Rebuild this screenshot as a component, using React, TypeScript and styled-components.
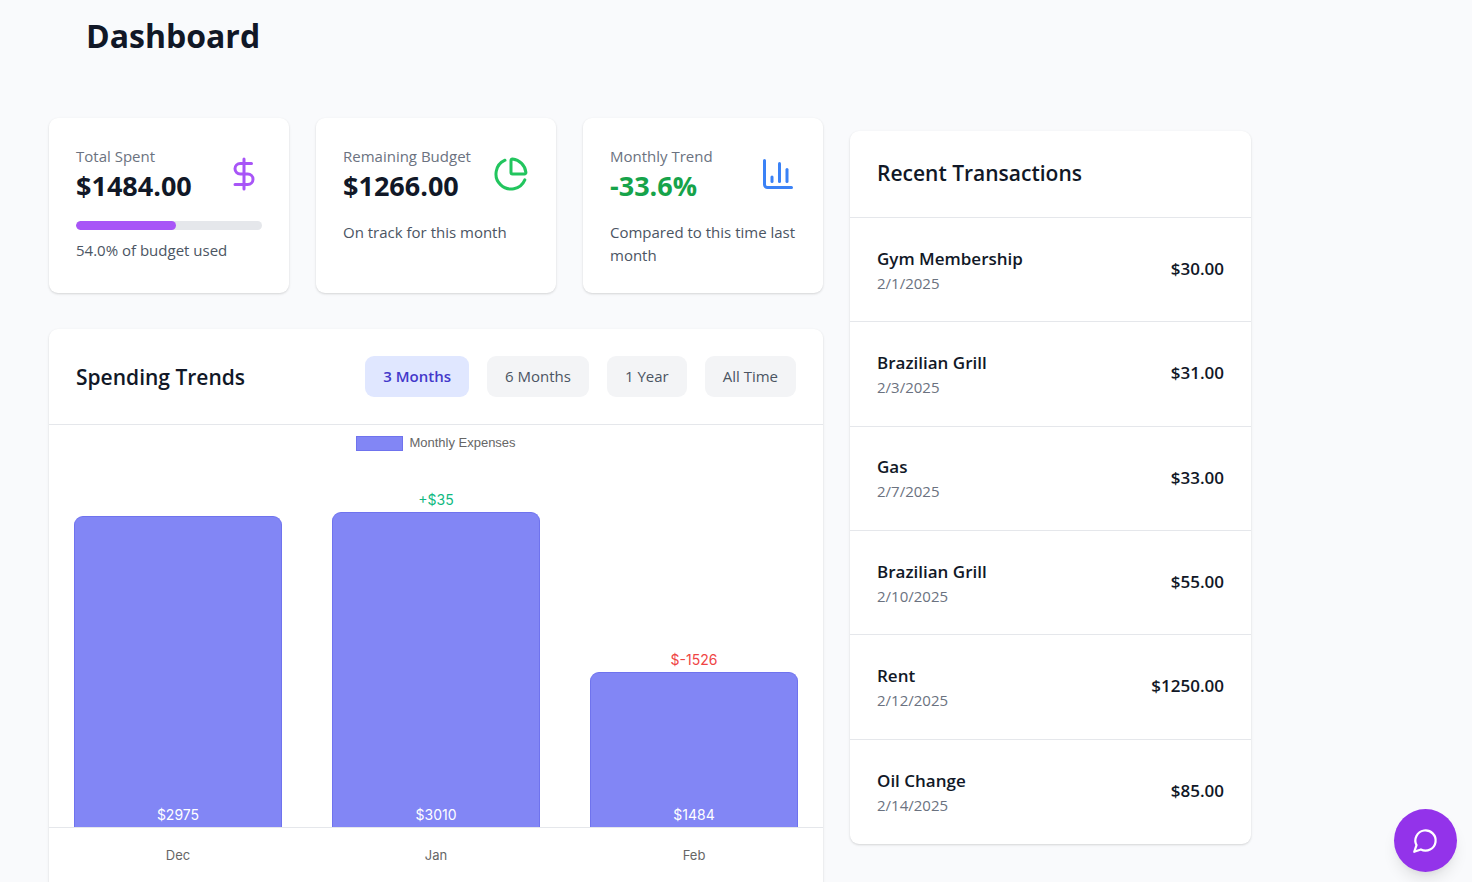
import React, { useState } from "react";
import styled, { createGlobalStyle, css } from "styled-components";
import { ChartColumn, ChartPie, DollarSign } from "lucide-react";

const GlobalStyle = createGlobalStyle`
  *, *::before, *::after { box-sizing: border-box; }
  body {
    margin: 0;
    min-height: 100vh;
    background: #f9fafc;
    color: #111827;
    font-family: "Segoe UI", "Open Sans", "Noto Sans", sans-serif;
    font-size: 16px;
  }
  h1, h2, p, ul { margin: 0; padding: 0; }
  button { font: inherit; border: 0; cursor: pointer; }
`;

const Page = styled.main`
  max-width: 1300px;
  padding: 16px 49px 0;
`;

const Title = styled.h1`
  padding: 0 37px;
  font-size: 32px;
  line-height: 40px;
  font-weight: 700;
`;

const Columns = styled.div`
  display: grid;
  grid-template-columns: 774fr 401fr;
  gap: 27px;
  align-items: start;
  margin-top: 62px;
`;

const MainColumn = styled.div`
  display: grid;
  gap: 36px;
  min-width: 0;
`;

const Card = styled.section`
  background: #fff;
  border-radius: 9px;
  box-shadow: 0 1px 3px rgba(0, 0, 0, 0.1), 0 1px 2px rgba(0, 0, 0, 0.06);
`;

const Stats = styled.div`
  display: grid;
  grid-template-columns: repeat(3, minmax(0, 1fr));
  gap: 27px;
`;

const StatCard = styled(Card)`
  padding: 27px 27px 26px;
`;

const StatTop = styled.div`
  display: flex;
  align-items: center;
  justify-content: space-between;
`;

const StatLabel = styled.p`
  color: #6b7280;
  font-size: 15px;
  line-height: 23px;
  white-space: nowrap;
`;

const StatValue = styled.p<{ $good?: boolean }>`
  color: ${(p) => (p.$good ? "#16a34a" : "#111827")};
  font-size: 27px;
  line-height: 35px;
  font-weight: 700;
`;

const StatNote = styled.p<{ $tight?: boolean }>`
  margin-top: ${(p) => (p.$tight ? 9 : 18)}px;
  color: #4b5563;
  font-size: 15px;
  line-height: 23px;
`;

const Track = styled.div`
  height: 9px;
  margin-top: 18px;
  border-radius: 5px;
  background: #e5e7eb;
  overflow: hidden;
`;

const Fill = styled.div`
  height: 100%;
  border-radius: 5px;
  background: #a855f7;
`;

const TrendsHeader = styled.header`
  display: flex;
  align-items: center;
  justify-content: space-between;
  padding: 27px;
  border-bottom: 1px solid #e5e7eb;
`;

const Heading = styled.h2`
  font-size: 21px;
  line-height: 32px;
  font-weight: 600;
`;

const Ranges = styled.div`
  display: flex;
  gap: 18px;
`;

const RangeButton = styled.button<{ $active: boolean }>`
  padding: 9px 18px;
  border-radius: 9px;
  font-size: 15px;
  line-height: 23px;
  background: #f3f4f6;
  color: #4b5563;
  ${(p) =>
    p.$active &&
    css`
      background: #e0e7ff;
      color: #4338ca;
      font-weight: 600;
    `}
`;

const Legend = styled.div`
  display: flex;
  align-items: center;
  justify-content: center;
  gap: 6px;
  padding-top: 9px;
  color: #666;
  font-family: "Liberation Sans", Arial, sans-serif;
  font-size: 13px;
  line-height: 18px;
`;

const Swatch = styled.span`
  width: 47px;
  height: 15px;
  border: 1px solid #6f73ee;
  background: #8286f5;
`;

const Plot = styled.div`
  display: grid;
  grid-template-columns: repeat(3, 1fr);
  align-items: end;
  height: 376px;
  border-bottom: 1px solid #e5e7eb;
  font-family: Inter, Arial, sans-serif;
  font-size: 14px;
  line-height: 18px;
`;

const BarSlot = styled.div`
  display: flex;
  flex-direction: column;
  align-items: center;
  gap: 3px;
`;

const Delta = styled.span<{ $up: boolean }>`
  color: ${(p) => (p.$up ? "#10b981" : "#ef4444")};
`;

const Bar = styled.div`
  display: flex;
  align-items: flex-end;
  justify-content: center;
  width: 81%;
  padding-bottom: 3px;
  border: 1px solid #6f73ee;
  border-bottom: 0;
  border-radius: 9px 9px 0 0;
  background: #8286f5;
  color: #fff;
`;

const Months = styled.div`
  display: grid;
  grid-template-columns: repeat(3, 1fr);
  padding: 18px 0 36px;
  color: #666;
  font-family: Inter, Arial, sans-serif;
  font-size: 13px;
  line-height: 18px;
  text-align: center;
`;

const Transactions = styled(Card)`
  margin-top: 13px;
`;

const TransactionsHeader = styled.header`
  padding: 26px 27px 28px;
  border-bottom: 1px solid #e5e7eb;
`;

const List = styled.ul`
  display: grid;
  grid-auto-rows: 1fr;
  min-height: 626px;
  list-style: none;
`;

const Row = styled.li`
  display: flex;
  align-items: center;
  justify-content: space-between;
  padding: 0 27px;
  &:not(:last-child) {
    border-bottom: 1px solid #e5e7eb;
  }
`;

const RowName = styled.p`
  font-size: 17px;
  line-height: 27px;
  font-weight: 600;
`;

const RowAmount = styled(RowName)`
  padding-bottom: 2px;
`;

const RowDate = styled.p`
  color: #6b7280;
  font-size: 15px;
  line-height: 23px;
`;

const ChatButton = styled.button`
  position: fixed;
  right: 15px;
  bottom: 10px;
  display: flex;
  align-items: center;
  justify-content: center;
  width: 63px;
  height: 63px;
  padding: 0;
  border-radius: 50%;
  background: #9333ea;
  color: #fff;
  box-shadow: 0 10px 15px -3px rgba(0, 0, 0, 0.1), 0 4px 6px -2px rgba(0, 0, 0, 0.05);
`;

const ranges = ["3 Months", "6 Months", "1 Year", "All Time"];

const months = [
  { name: "Dec", total: 2975, delta: 0 },
  { name: "Jan", total: 3010, delta: 35 },
  { name: "Feb", total: 1484, delta: -1526 },
];

const FULL_BAR = 315;
const peak = Math.max(...months.map((m) => m.total));

const transactions = [
  { name: "Gym Membership", date: "2/1/2025", amount: 30 },
  { name: "Brazilian Grill", date: "2/3/2025", amount: 31 },
  { name: "Gas", date: "2/7/2025", amount: 33 },
  { name: "Brazilian Grill", date: "2/10/2025", amount: 55 },
  { name: "Rent", date: "2/12/2025", amount: 1250 },
  { name: "Oil Change", date: "2/14/2025", amount: 85 },
];

function ChatIcon() {
  return (
    <svg width="27" height="27" viewBox="0 0 24 24" fill="none" stroke="currentColor" strokeWidth="2" strokeLinecap="round" strokeLinejoin="round" aria-hidden="true">
      <path d="M7.9 20A9 9 0 1 0 4 16.1L2 22Z" />
    </svg>
  );
}

export default function App() {
  const [range, setRange] = useState(ranges[0]);
  const used = 54;

  return (
    <>
      <GlobalStyle />
      <Page>
        <Title>Dashboard</Title>
        <Columns>
          <MainColumn>
            <Stats>
              <StatCard>
                <StatTop>
                  <div>
                    <StatLabel>Total Spent</StatLabel>
                    <StatValue>$1484.00</StatValue>
                  </div>
                  <DollarSign size={36} color="#a855f7" />
                </StatTop>
                <Track>
                  <Fill style={{ width: `${used}%` }} />
                </Track>
                <StatNote $tight>{used.toFixed(1)}% of budget used</StatNote>
              </StatCard>
              <StatCard>
                <StatTop>
                  <div>
                    <StatLabel>Remaining Budget</StatLabel>
                    <StatValue>$1266.00</StatValue>
                  </div>
                  <ChartPie size={36} color="#22c55e" />
                </StatTop>
                <StatNote>On track for this month</StatNote>
              </StatCard>
              <StatCard>
                <StatTop>
                  <div>
                    <StatLabel>Monthly Trend</StatLabel>
                    <StatValue $good>-33.6%</StatValue>
                  </div>
                  <ChartColumn size={36} color="#3b82f6" />
                </StatTop>
                <StatNote>Compared to this time last month</StatNote>
              </StatCard>
            </Stats>

            <Card>
              <TrendsHeader>
                <Heading>Spending Trends</Heading>
                <Ranges>
                  {ranges.map((r) => (
                    <RangeButton key={r} type="button" $active={r === range} aria-pressed={r === range} onClick={() => setRange(r)}>
                      {r}
                    </RangeButton>
                  ))}
                </Ranges>
              </TrendsHeader>
              <Legend>
                <Swatch />
                Monthly Expenses
              </Legend>
              <Plot>
                {months.map((m) => (
                  <BarSlot key={m.name}>
                    {m.delta !== 0 && (
                      <Delta $up={m.delta > 0}>
                        {m.delta > 0 ? "+$" : "$"}
                        {m.delta}
                      </Delta>
                    )}
                    <Bar style={{ height: Math.round((m.total / peak) * FULL_BAR) }}>${m.total}</Bar>
                  </BarSlot>
                ))}
              </Plot>
              <Months>
                {months.map((m) => (
                  <span key={m.name}>{m.name}</span>
                ))}
              </Months>
            </Card>
          </MainColumn>

          <Transactions>
            <TransactionsHeader>
              <Heading>Recent Transactions</Heading>
            </TransactionsHeader>
            <List>
              {transactions.map((t) => (
                <Row key={t.date}>
                  <div>
                    <RowName>{t.name}</RowName>
                    <RowDate>{t.date}</RowDate>
                  </div>
                  <RowAmount>${t.amount.toFixed(2)}</RowAmount>
                </Row>
              ))}
            </List>
          </Transactions>
        </Columns>
      </Page>
      <ChatButton type="button" aria-label="Open chat">
        <ChatIcon />
      </ChatButton>
    </>
  );
}
